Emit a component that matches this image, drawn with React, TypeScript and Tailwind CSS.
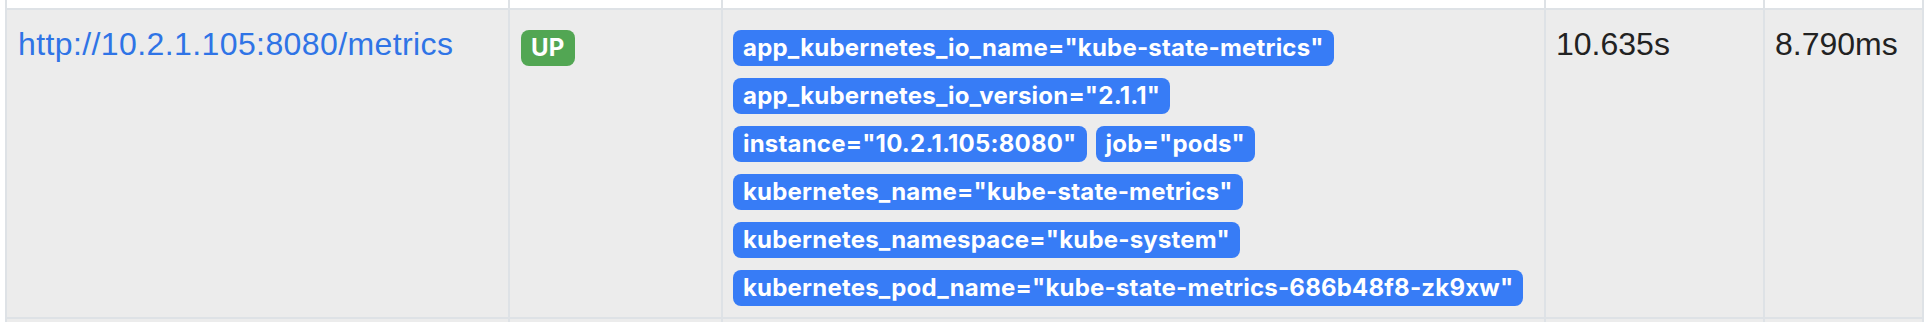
const labelRows = [
    ['app_kubernetes_io_name="kube-state-metrics"'],
    ['app_kubernetes_io_version="2.1.1"'],
    ['instance="10.2.1.105:8080"', 'job="pods"'],
    ['kubernetes_name="kube-state-metrics"'],
    ['kubernetes_namespace="kube-system"'],
    ['kubernetes_pod_name="kube-state-metrics-686b48f8-zk9xw"'],
];

const cols = "grid grid-cols-[503px_213px_823px_219px_161px] ml-[5px] w-[1919px]";
const cell = "border-l-2 border-[#dee2e6]";

export default function App() {
    return (
        <div className="h-[322px] w-full overflow-hidden bg-white font-['Liberation_Sans',Arial,sans-serif] text-[32px] text-[#222222]">
            {/* tail of the header row */}
            <div className={`${cols} h-[10px] border-b-2 border-[#dee2e6]`}>
                <div className={cell} />
                <div className={cell} />
                <div className={cell} />
                <div className={cell} />
                <div className={`${cell} border-r-2`} />
            </div>
            {/* target row */}
            <div className={`${cols} border-b-2 border-[#dee2e6] bg-[#ececec]`}>
                <div className={`${cell} px-[11px] py-[10px] leading-[48px]`}>
                    <a href="#" className="tracking-[0.4px] text-[#2f74e6]">
                        http://10.2.1.105:8080/metrics
                    </a>
                </div>
                <div className={`${cell} px-[11px] py-[10px]`}>
                    <div className="flex pt-[10px]">
                        <Badge color="bg-[#52a653]">UP</Badge>
                    </div>
                </div>
                <div className={`${cell} px-[10px] py-[10px]`}>
                    <div className="flex flex-col items-start gap-[12px] pt-[10px] pb-[1px]">
                        {labelRows.map((row) => (
                            <div key={row[0]} className="flex gap-[9px]">
                                {row.map((l) => (
                                    <Badge key={l} color="bg-[#377cf6]">
                                        {l}
                                    </Badge>
                                ))}
                            </div>
                        ))}
                    </div>
                </div>
                <div className={`${cell} px-[10px] py-[10px] leading-[48px]`}>10.635s</div>
                <div className={`${cell} border-r-2 px-[10px] py-[10px] leading-[48px]`}>8.790ms</div>
            </div>
            {/* start of the next row */}
            <div className={`${cols} h-[10px] bg-[#ececec]`}>
                <div className={cell} />
                <div className={cell} />
                <div className={cell} />
                <div className={cell} />
                <div className={`${cell} border-r-2`} />
            </div>
        </div>
    );
}

function Badge({ color, children }: { color: string; children: React.ReactNode }) {
    return (
        <span
            className={`${color} block h-[36px] rounded-[8px] px-[10px] font-['Inter',sans-serif] text-[24px] leading-[36px] font-bold tracking-[0.2px] whitespace-nowrap text-white`}
        >
            {children}
        </span>
    );
}
